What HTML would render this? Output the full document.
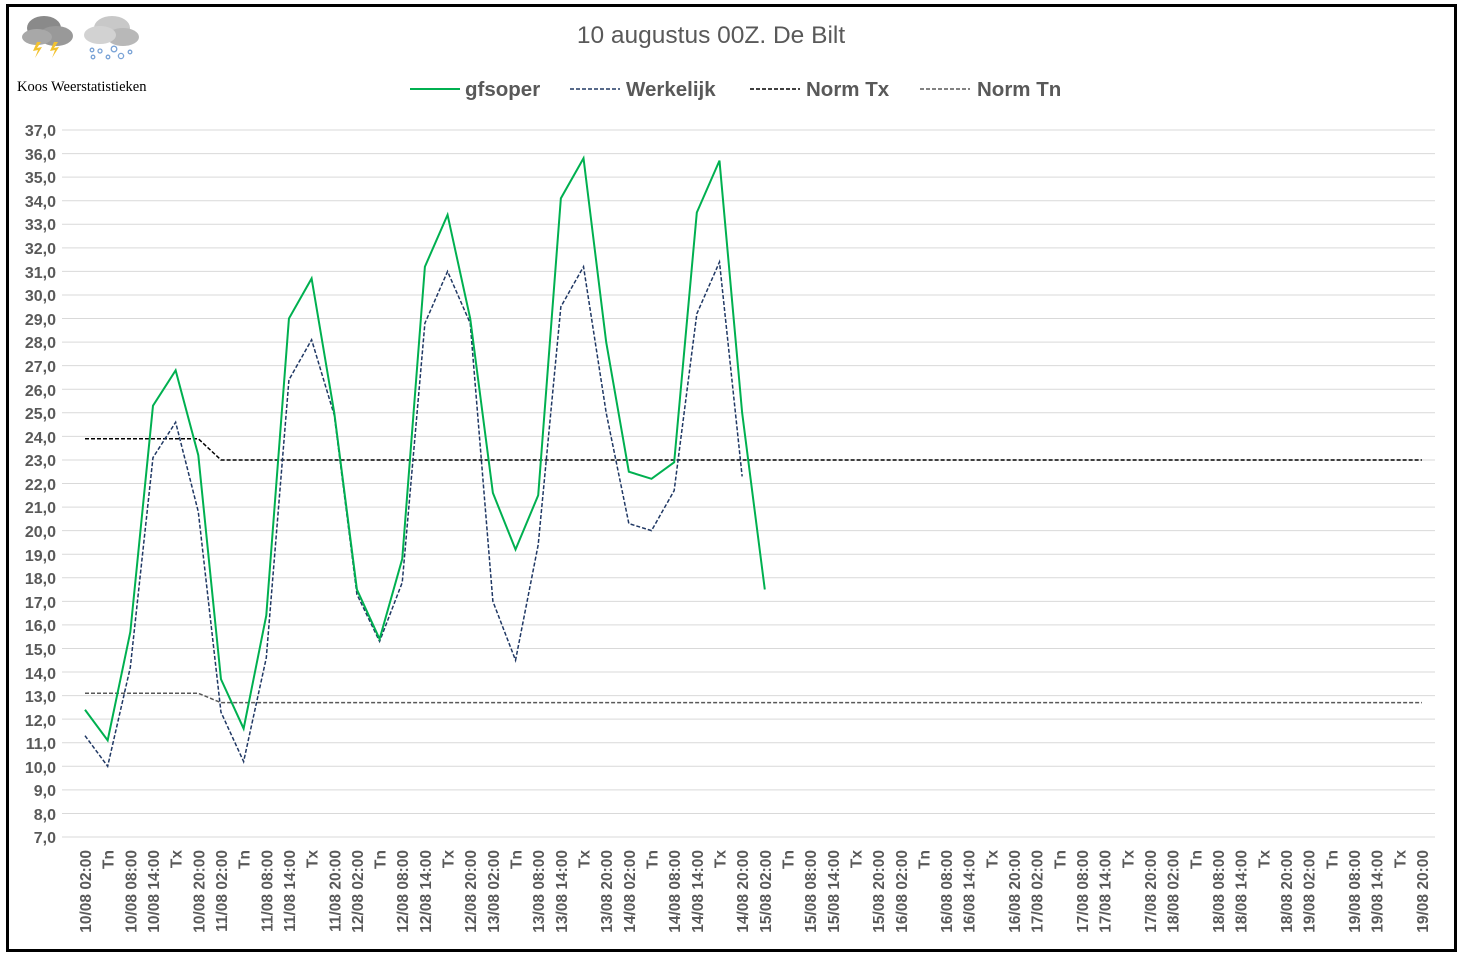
<!DOCTYPE html>
<html><head><meta charset="utf-8"><style>
body{margin:0;background:#fff;}
svg{display:block;font-family:"Liberation Sans",Arial,sans-serif;}
</style></head><body>
<svg width="1462" height="958" viewBox="0 0 1462 958" xmlns="http://www.w3.org/2000/svg">
<rect x="0" y="0" width="1462" height="958" fill="#fff"/>
<rect x="7.5" y="5.5" width="1448" height="945" fill="none" stroke="#000" stroke-width="3"/>
<!-- icons -->
<g>
<ellipse cx="44" cy="28" rx="17" ry="12" fill="#8a8a8a"/>
<ellipse cx="56" cy="36" rx="17" ry="10" fill="#999"/>
<ellipse cx="37" cy="37" rx="15" ry="8" fill="#a8a8a8"/>
<polygon points="37,42 33,51 38,50 35,58 42,47 37,48 41,42" fill="#f2c230"/>
<polygon points="54,42 50,51 55,50 52,58 59,47 54,48 58,42" fill="#f2c230"/>
<ellipse cx="112" cy="28" rx="18" ry="12" fill="#c8c8c8"/>
<ellipse cx="123" cy="37" rx="16" ry="9" fill="#b8b8b8"/>
<ellipse cx="100" cy="35" rx="16" ry="9" fill="#d2d2d2"/>
<g fill="none" stroke="#7aa3d6" stroke-width="1.3"><circle cx="92" cy="50" r="1.8"/><circle cx="100" cy="51" r="2"/><circle cx="114" cy="49" r="2.8"/><circle cx="130" cy="52" r="1.8"/><circle cx="93" cy="57" r="1.8"/><circle cx="108" cy="57" r="1.8"/><circle cx="121" cy="56" r="2.6"/></g>
</g>
<text x="17" y="91" font-family="Liberation Serif,serif" font-size="14.5" fill="#000">Koos Weerstatistieken</text>
<text x="711" y="43" text-anchor="middle" font-size="24.5" fill="#595959">10 augustus 00Z. De Bilt</text>
<!-- legend -->
<line x1="410" y1="89" x2="460" y2="89" stroke="#00b050" stroke-width="2"/>
<text x="465" y="96" font-size="20.5" font-weight="bold" fill="#595959">gfsoper</text>
<line x1="570" y1="89" x2="620" y2="89" stroke="#203864" stroke-width="1.5" stroke-dasharray="4,2"/>
<text x="626" y="96" font-size="20.5" font-weight="bold" fill="#595959">Werkelijk</text>
<line x1="750" y1="89" x2="800" y2="89" stroke="#000" stroke-width="1.5" stroke-dasharray="4,2"/>
<text x="806" y="96" font-size="20.5" font-weight="bold" fill="#595959">Norm Tx</text>
<line x1="920" y1="89" x2="970" y2="89" stroke="#595959" stroke-width="1.5" stroke-dasharray="4,2"/>
<text x="977" y="96" font-size="20.5" font-weight="bold" fill="#595959">Norm Tn</text>
<g id="grid" stroke="#d9d9d9" stroke-width="1"></g>
<g font-size="16" font-weight="bold" fill="#595959" text-anchor="end">
<text x="56" y="136">37,0</text><text x="56" y="160">36,0</text><text x="56" y="183">35,0</text><text x="56" y="207">34,0</text><text x="56" y="230">33,0</text><text x="56" y="254">32,0</text><text x="56" y="278">31,0</text><text x="56" y="301">30,0</text><text x="56" y="325">29,0</text><text x="56" y="348">28,0</text><text x="56" y="372">27,0</text><text x="56" y="396">26,0</text><text x="56" y="419">25,0</text><text x="56" y="443">24,0</text><text x="56" y="466">23,0</text><text x="56" y="490">22,0</text><text x="56" y="513">21,0</text><text x="56" y="537">20,0</text><text x="56" y="561">19,0</text><text x="56" y="584">18,0</text><text x="56" y="608">17,0</text><text x="56" y="631">16,0</text><text x="56" y="655">15,0</text><text x="56" y="679">14,0</text><text x="56" y="702">13,0</text><text x="56" y="726">12,0</text><text x="56" y="749">11,0</text><text x="56" y="773">10,0</text><text x="56" y="796">9,0</text><text x="56" y="820">8,0</text><text x="56" y="843">7,0</text>
</g>
<g font-size="15.5" font-weight="bold" fill="#595959" text-anchor="end">
<text transform="translate(91,850) rotate(-90)">10/08 02:00</text>
<text transform="translate(113.7,850) rotate(-90)">Tn</text>
<text transform="translate(136.3,850) rotate(-90)">10/08 08:00</text>
<text transform="translate(159,850) rotate(-90)">10/08 14:00</text>
<text transform="translate(181.6,850) rotate(-90)">Tx</text>
<text transform="translate(204.3,850) rotate(-90)">10/08 20:00</text>
<text transform="translate(227,850) rotate(-90)">11/08 02:00</text>
<text transform="translate(249.6,850) rotate(-90)">Tn</text>
<text transform="translate(272.3,850) rotate(-90)">11/08 08:00</text>
<text transform="translate(294.9,850) rotate(-90)">11/08 14:00</text>
<text transform="translate(317.6,850) rotate(-90)">Tx</text>
<text transform="translate(340.3,850) rotate(-90)">11/08 20:00</text>
<text transform="translate(362.9,850) rotate(-90)">12/08 02:00</text>
<text transform="translate(385.6,850) rotate(-90)">Tn</text>
<text transform="translate(408.2,850) rotate(-90)">12/08 08:00</text>
<text transform="translate(430.9,850) rotate(-90)">12/08 14:00</text>
<text transform="translate(453.6,850) rotate(-90)">Tx</text>
<text transform="translate(476.2,850) rotate(-90)">12/08 20:00</text>
<text transform="translate(498.9,850) rotate(-90)">13/08 02:00</text>
<text transform="translate(521.5,850) rotate(-90)">Tn</text>
<text transform="translate(544.2,850) rotate(-90)">13/08 08:00</text>
<text transform="translate(566.9,850) rotate(-90)">13/08 14:00</text>
<text transform="translate(589.5,850) rotate(-90)">Tx</text>
<text transform="translate(612.2,850) rotate(-90)">13/08 20:00</text>
<text transform="translate(634.8,850) rotate(-90)">14/08 02:00</text>
<text transform="translate(657.5,850) rotate(-90)">Tn</text>
<text transform="translate(680.2,850) rotate(-90)">14/08 08:00</text>
<text transform="translate(702.8,850) rotate(-90)">14/08 14:00</text>
<text transform="translate(725.5,850) rotate(-90)">Tx</text>
<text transform="translate(748.1,850) rotate(-90)">14/08 20:00</text>
<text transform="translate(770.8,850) rotate(-90)">15/08 02:00</text>
<text transform="translate(793.5,850) rotate(-90)">Tn</text>
<text transform="translate(816.1,850) rotate(-90)">15/08 08:00</text>
<text transform="translate(838.8,850) rotate(-90)">15/08 14:00</text>
<text transform="translate(861.4,850) rotate(-90)">Tx</text>
<text transform="translate(884.1,850) rotate(-90)">15/08 20:00</text>
<text transform="translate(906.8,850) rotate(-90)">16/08 02:00</text>
<text transform="translate(929.4,850) rotate(-90)">Tn</text>
<text transform="translate(952.1,850) rotate(-90)">16/08 08:00</text>
<text transform="translate(974.7,850) rotate(-90)">16/08 14:00</text>
<text transform="translate(997.4,850) rotate(-90)">Tx</text>
<text transform="translate(1020.1,850) rotate(-90)">16/08 20:00</text>
<text transform="translate(1042.7,850) rotate(-90)">17/08 02:00</text>
<text transform="translate(1065.4,850) rotate(-90)">Tn</text>
<text transform="translate(1088,850) rotate(-90)">17/08 08:00</text>
<text transform="translate(1110.7,850) rotate(-90)">17/08 14:00</text>
<text transform="translate(1133.4,850) rotate(-90)">Tx</text>
<text transform="translate(1156,850) rotate(-90)">17/08 20:00</text>
<text transform="translate(1178.7,850) rotate(-90)">18/08 02:00</text>
<text transform="translate(1201.3,850) rotate(-90)">Tn</text>
<text transform="translate(1224,850) rotate(-90)">18/08 08:00</text>
<text transform="translate(1246.7,850) rotate(-90)">18/08 14:00</text>
<text transform="translate(1269.3,850) rotate(-90)">Tx</text>
<text transform="translate(1292,850) rotate(-90)">18/08 20:00</text>
<text transform="translate(1314.6,850) rotate(-90)">19/08 02:00</text>
<text transform="translate(1337.3,850) rotate(-90)">Tn</text>
<text transform="translate(1360,850) rotate(-90)">19/08 08:00</text>
<text transform="translate(1382.6,850) rotate(-90)">19/08 14:00</text>
<text transform="translate(1405.3,850) rotate(-90)">Tx</text>
<text transform="translate(1428,850) rotate(-90)">19/08 20:00</text>
</g>
<polyline id="ntn" fill="none" stroke="#595959" stroke-width="1.5" stroke-dasharray="4,2"/>
<polyline id="ntx" fill="none" stroke="#000" stroke-width="1.5" stroke-dasharray="4,2"/>
<polyline id="wk" fill="none" stroke="#203864" stroke-width="1.5" stroke-dasharray="4,2"/>
<polyline id="gfs" fill="none" stroke="#00b050" stroke-width="2"/>
</svg>
<script>
var X=function(i){return 85+22.66*i;},Y=function(v){return 130+(37-v)*23.567;};
var g=document.getElementById('grid'),s='';
for(var k=0;k<=30;k++){var y=Y(37-k);s+='<line x1="62" x2="1435" y1="'+y+'" y2="'+y+'"/>';}
g.innerHTML=s;
function pts(a){return a.map(function(v,i){return X(i)+','+Y(v);}).join(' ');}
var gfs=[12.4,11.1,15.7,25.3,26.8,23.2,13.7,11.6,16.4,29.0,30.7,25.0,17.5,15.4,18.8,31.2,33.4,29.0,21.6,19.2,21.5,34.1,35.8,28.0,22.5,22.2,22.9,33.5,35.7,25.0,17.5];
var wk=[11.3,10.0,14.2,23.1,24.6,20.8,12.3,10.2,14.6,26.4,28.1,24.9,17.3,15.3,17.8,28.8,31.0,28.8,17.0,14.5,19.4,29.5,31.2,25.0,20.3,20.0,21.7,29.2,31.4,22.3];
var tx=[],tn=[];for(var i=0;i<60;i++){tx.push(i<6?23.9:23.0);tn.push(i<6?13.1:12.7);}
document.getElementById('gfs').setAttribute('points',pts(gfs));
document.getElementById('wk').setAttribute('points',pts(wk));
document.getElementById('ntx').setAttribute('points',pts(tx));
document.getElementById('ntn').setAttribute('points',pts(tn));
</script>
</body></html>
